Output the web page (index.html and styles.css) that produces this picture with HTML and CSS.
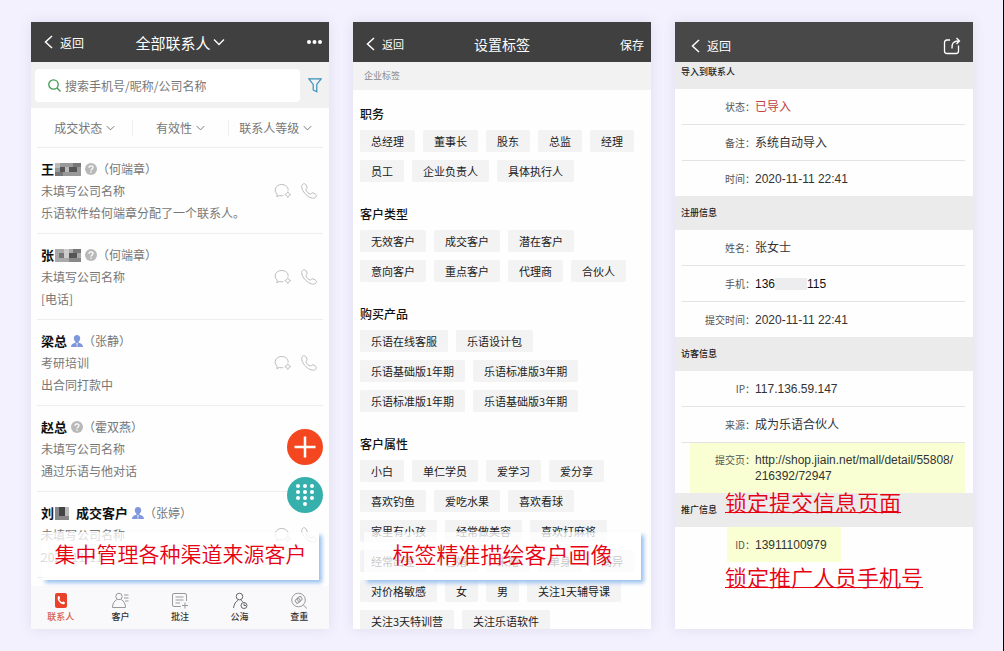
FILE: index.html
```html
<!DOCTYPE html>
<html lang="zh-CN">
<head>
    <meta charset="UTF-8">
    <title>乐语 - 客户管理</title>
    <link rel="stylesheet" href="styles.css">
</head>
<body>

<!-- Shared icons -->
<svg class="sprite" aria-hidden="true">
    <symbol id="back" viewBox="0 0 9 14"><path d="M8 1L1.500 7L8 13" fill="none" stroke="currentColor" stroke-width="1.500"/></symbol>
    <symbol id="down" viewBox="0 0 12 8"><path d="M1 1.500L6 6.500L11 1.500" fill="none" stroke="currentColor" stroke-width="1.300"/></symbol>
    <symbol id="unknown" viewBox="0 0 12 12">
        <circle cx="6" cy="6" r="6" fill="#b9b9b9"/>
        <path d="M4 4.700C4 2.200 8 2.200 8 4.600C8 6 6 6 6 7.500M6 8.600V9.800" fill="none" stroke="#fff" stroke-width="1.300"/>
    </symbol>
    <symbol id="person" viewBox="0 0 12 12">
        <path d="M6 0C7.900 0 9.200 1.300 9.200 3.200C9.200 4.700 8.400 5.900 7.600 6.500V7.700C9.500 8.200 12 9 12 12H0C0 9 2.500 8.200 4.400 7.700V6.500C3.600 5.900 2.800 4.700 2.800 3.200C2.800 1.300 4.100 0 6 0Z" fill="#7f97dc"/>
        <path d="M5 8L6 9.200L7 8M6 9V12" stroke="#fff" stroke-width=".6" fill="none"/>
    </symbol>
    <symbol id="chat" viewBox="0 0 18 16">
        <path d="M3.200 11.200C-.8 7.800 1.500 1.500 7.500 1.500C12 1.500 14.700 4.400 14 7.600M3.200 11.200L2.800 13.600L5.600 12.500C6.800 12.900 8 12.900 9.200 12.600" fill="none" stroke="#bbb" stroke-width="1"/>
        <path d="M13.800 8.700Q14.300 11 16.800 11.600Q14.300 12.200 13.800 14.600Q13.200 12.200 10.800 11.600Q13.200 11 13.800 8.700Z" fill="none" stroke="#bbb" stroke-width=".9"/>
    </symbol>
    <symbol id="phone" viewBox="0 0 16 16">
        <path d="M1.500 1.500C2.700.1 4.300.6 5 1.900L6.100 4.100C6.600 5.200 4.700 5.900 5 6.900C5.700 8.900 7.500 10.700 9.400 11C10.400 11.200 10.700 9.400 11.900 9.800L14.300 11C15.800 11.800 15.700 13.400 14.500 14.400C12.300 16.200 8.200 14.700 5 11.600C1.700 8.400-.6 3.800 1.500 1.500Z" fill="none" stroke="#bbb" stroke-width="1"/>
    </symbol>
</svg>

<main class="screens">

    <!-- Contacts -->
    <section class="phone">
        <header class="topbar">
            <button class="back"><svg class="back-icon"><use href="#back"/></svg>返回</button>
            <button class="title title-large">全部联系人<svg class="title-arrow"><use href="#down"/></svg></button>
            <button class="topbar-action" aria-label="更多">
                <svg width="15" height="4" viewBox="0 0 15 4" fill="#fff"><circle cx="2" cy="2" r="2"/><circle cx="7.500" cy="2" r="2"/><circle cx="13" cy="2" r="2"/></svg>
            </button>
        </header>
        <div class="search">
            <label class="search-box">
                <svg width="13" height="13" viewBox="0 0 13 13" fill="none" stroke="#3c9a4e" stroke-width="1.300"><circle cx="5.500" cy="5.500" r="4.700"/><path d="M9 9L12.500 12.500"/></svg>
                <input type="text" aria-label="搜索" placeholder="搜索手机号/昵称/公司名称">
            </label>
            <button class="search-filter" aria-label="筛选">
                <svg width="14" height="15" viewBox="0 0 14 15" fill="none" stroke="#3a8fbd" stroke-width="1.200"><path d="M.8.800H13.200L8.800 6.500V13.800L5.200 12V6.500Z"/></svg>
            </button>
        </div>
        <div class="filters">
            <button>成交状态<svg class="filter-arrow"><use href="#down"/></svg></button>
            <button>有效性<svg class="filter-arrow"><use href="#down"/></svg></button>
            <button>联系人等级<svg class="filter-arrow"><use href="#down"/></svg></button>
        </div>
        <ul class="contacts">
            <li>
                <div class="contact-text">
                    <div class="contact-name"><strong>王</strong>
                        <svg class="mask" width="26" height="13" viewBox="0 0 26 13"><path fill="#999" d="M0 0H26V13H0Z"/><path fill="#555" d="M5 4H10V9H5ZM14 4H22V9H14Z"/><path fill="#bbb" d="M0 0H5V5H0ZM10 4H14V9H10Z"/><path fill="#777" d="M0 9H8V13H0ZM18 0H26V4H18Z"/></svg>
                        <svg class="badge"><use href="#unknown"/></svg><span>（何端章）</span></div>
                    <div>未填写公司名称</div>
                    <div>乐语软件给何端章分配了一个联系人。</div>
                </div>
                <button aria-label="消息"><svg width="18" height="16"><use href="#chat"/></svg></button>
                <button aria-label="电话"><svg width="16" height="16"><use href="#phone"/></svg></button>
            </li>
            <li>
                <div class="contact-text">
                    <div class="contact-name"><strong>张</strong>
                        <svg class="mask" width="26" height="13" viewBox="0 0 26 13"><path fill="#aaa" d="M0 0H26V13H0Z"/><path fill="#777" d="M4 4H9V9H4ZM18 0H26V4H18Z"/><path fill="#555" d="M14 4H22V9H14Z"/><path fill="#ccc" d="M9 0H14V9H9Z"/><path fill="#888" d="M14 9H26V13H14Z"/></svg>
                        <svg class="badge"><use href="#unknown"/></svg><span>（何端章）</span></div>
                    <div>未填写公司名称</div>
                    <div>[电话]</div>
                </div>
                <button aria-label="消息"><svg width="18" height="16"><use href="#chat"/></svg></button>
                <button aria-label="电话"><svg width="16" height="16"><use href="#phone"/></svg></button>
            </li>
            <li>
                <div class="contact-text">
                    <div class="contact-name"><strong>梁总</strong><svg class="badge"><use href="#person"/></svg><span>（张静）</span></div>
                    <div>考研培训</div>
                    <div>出合同打款中</div>
                </div>
                <button aria-label="消息"><svg width="18" height="16"><use href="#chat"/></svg></button>
                <button aria-label="电话"><svg width="16" height="16"><use href="#phone"/></svg></button>
            </li>
            <li>
                <div class="contact-text">
                    <div class="contact-name"><strong>赵总</strong><svg class="badge"><use href="#unknown"/></svg><span>（霍双燕）</span></div>
                    <div>未填写公司名称</div>
                    <div>通过乐语与他对话</div>
                </div>
            </li>
            <li>
                <div class="contact-text">
                    <div class="contact-name"><strong>刘</strong>
                        <svg class="mask" width="14" height="13" viewBox="0 0 14 13"><path fill="#888" d="M0 0H14V13H0Z"/><path fill="#444" d="M4 0H10V9H4Z"/><path fill="#bbb" d="M10 0H14V9H10Z"/></svg>
                        <strong class="contact-tag">成交客户</strong><svg class="badge"><use href="#person"/></svg><span>（张婷）</span></div>
                    <div>未填写公司名称</div>
                    <div>2020-11-11</div>
                </div>
                <button aria-label="消息"><svg width="18" height="16"><use href="#chat"/></svg></button>
                <button aria-label="电话"><svg width="16" height="16"><use href="#phone"/></svg></button>
            </li>
        </ul>
        <nav class="tabs">
            <a class="active" href="#">
                <svg viewBox="0 0 18 18"><rect x="3" y="1" width="12" height="15" rx="2" fill="#e8432a"/><path d="M6 4.500C6.700 3.700 7.300 4 7.700 4.800L8.100 5.700C8.300 6.300 7.300 6.800 7.400 7.300C7.700 8.600 8.800 9.800 10 10.100C10.500 10.200 10.900 9.200 11.500 9.500L12.600 10.200C13.200 10.700 13 11.500 12.300 12C9.500 13.600 4.200 7.800 6 4.500Z" fill="#fff"/></svg>
                联系人</a>
            <a href="#">
                <svg viewBox="0 0 18 18" fill="none" stroke="#999"><circle cx="8" cy="4.500" r="3.200"/><path d="M5.800 7.500C3 9 1.500 12 1.500 15.500H14.500C14.500 12 13 9 10.200 7.500M13 3H17.500M13 6H17.500M14 9H17.500"/></svg>
                客户</a>
            <a href="#">
                <svg viewBox="0 0 18 18" fill="none" stroke="#999"><path d="M15.500 9V3Q15.500 1.500 14 1.500H3Q1.500 1.500 1.500 3V13Q1.500 14.500 3 14.500H10M4.500 5H12.500M4.500 8H12.500M4.500 11H9M14 10.500V16.500M11 13.500H17"/></svg>
                批注</a>
            <a href="#">
                <svg viewBox="0 0 18 18" fill="none" stroke="#666"><circle cx="8.500" cy="4.500" r="3.300"/><path d="M2.500 16C3 12 5 9.300 7.300 8.200M9.700 8.200Q11 8.800 11.800 9.700"/><circle cx="13" cy="13.500" r="3"/><path d="M13 11.500V13.500H15"/></svg>
                公海</a>
            <a href="#">
                <svg viewBox="0 0 18 18" fill="none" stroke="#999"><circle cx="8.500" cy="8" r="6.800"/><path d="M13.300 13L17 16.500"/><rect x="5.500" y="6.800" width="4.500" height="4" rx="1" transform="rotate(-35 7.700 8.800)"/><rect x="7.300" y="5" width="4.500" height="4" rx="1" transform="rotate(-35 9.500 7)"/></svg>
                查重</a>
        </nav>
        <div class="floating">
            <button class="add" aria-label="新增"><svg width="36" height="36" viewBox="0 0 36 36"><path d="M18 7.500V28.500M7.500 18H28.500" stroke="#fff" stroke-width="2.500"/></svg></button>
            <button class="dial" aria-label="拨号">
                <svg width="36" height="36" viewBox="0 0 36 36" fill="#fff"><circle cx="11" cy="9" r="2"/><circle cx="18" cy="9" r="2"/><circle cx="25" cy="9" r="2"/><circle cx="11" cy="15" r="2"/><circle cx="18" cy="15" r="2"/><circle cx="25" cy="15" r="2"/><circle cx="11" cy="21" r="2"/><circle cx="18" cy="21" r="2"/><circle cx="25" cy="21" r="2"/><circle cx="18" cy="27" r="2"/></svg>
            </button>
        </div>
        <p class="note note-small">集中管理各种渠道来源客户</p>
    </section>

    <!-- Tags -->
    <section class="phone">
        <header class="topbar topbar-tags">
            <button class="back"><svg class="back-icon"><use href="#back"/></svg>返回</button>
            <h1 class="title">设置标签</h1>
            <button class="topbar-action">保存</button>
        </header>
        <p class="subtitle">企业标签</p>
        <div class="tag-groups">
            <h2>职务</h2>
            <div class="tags">
                <button>总经理</button><button>董事长</button><button>股东</button><button>总监</button><button>经理</button>
                <button>员工</button><button>企业负责人</button><button>具体执行人</button>
            </div>
            <h2>客户类型</h2>
            <div class="tags">
                <button>无效客户</button><button>成交客户</button><button>潜在客户</button>
                <button>意向客户</button><button>重点客户</button><button>代理商</button><button>合伙人</button>
            </div>
            <h2>购买产品</h2>
            <div class="tags">
                <button>乐语在线客服</button><button>乐语设计包</button>
                <button>乐语基础版1年期</button><button>乐语标准版3年期</button>
                <button>乐语标准版1年期</button><button>乐语基础版3年期</button>
            </div>
            <h2>客户属性</h2>
            <div class="tags">
                <button>小白</button><button>单仁学员</button><button>爱学习</button><button>爱分享</button>
                <button>喜欢钓鱼</button><button>爱吃水果</button><button>喜欢看球</button>
                <button>家里有小孩</button><button>经常做美容</button><button>喜欢打麻将</button>
                <button>经常出差</button><button>已婚</button><button>未婚</button><button>单身</button><button>离异</button>
                <button>对价格敏感</button><button>女</button><button>男</button><button>关注1天辅导课</button>
                <button>关注3天特训营</button><button>关注乐语软件</button>
            </div>
        </div>
        <p class="note">标签精准描绘客户画像</p>
    </section>

    <!-- Contact details -->
    <section class="phone details">
        <header class="topbar topbar-details">
            <button class="back"><svg class="back-icon"><use href="#back"/></svg>返回</button>
            <span></span>
            <button class="topbar-action" aria-label="分享">
                <svg width="18" height="18" viewBox="0 0 18 18" fill="none" stroke="#fff" stroke-width="1.300"><path d="M7 3H4Q1.500 3 1.500 5.500V14Q1.500 16.500 4 16.500H13Q15.500 16.500 15.500 14V8.500M9 11.500C8.500 6.500 10.500 4 15.500 4M13.500 1L16.500 4L13.500 7"/></svg>
            </button>
        </header>
        <h2 class="first">导入到联系人</h2>
        <dl>
            <div><dt>状态：</dt><dd class="imported">已导入</dd></div>
            <div><dt>备注：</dt><dd>系统自动导入</dd></div>
            <div><dt>时间：</dt><dd>2020-11-11 22:41</dd></div>
        </dl>
        <h2>注册信息</h2>
        <dl>
            <div><dt>姓名：</dt><dd>张女士</dd></div>
            <div><dt>手机：</dt><dd class="mobile">136<span class="hidden-digits"></span>115</dd></div>
            <div><dt>提交时间：</dt><dd>2020-11-11 22:41</dd></div>
        </dl>
        <h2>访客信息</h2>
        <dl>
            <div><dt>IP：</dt><dd>117.136.59.147</dd></div>
            <div><dt>来源：</dt><dd>成为乐语合伙人</dd></div>
            <div class="marked marked-page"><dt>提交页：</dt><dd>http://shop.jiain.net/mall/detail/55808/<br>216392/72947</dd></div>
        </dl>
        <div class="anchor"><p class="caption caption-page">锁定提交信息页面</p></div>
        <h2>推广信息</h2>
        <dl>
            <div class="marked marked-id"><dt>ID：</dt><dd>13911100979</dd></div>
        </dl>
        <div class="anchor"><p class="caption">锁定推广人员手机号</p></div>
    </section>

</main>

</body>
</html>
```
FILE: styles.css
```css
* {
    box-sizing: border-box;
}
body {
    margin: 0;
    height: 100vh;
    padding: 22px 30px 22px 31px;
    border-right: 1px solid #000;
    background-color: #f3f1fe;
    font-family: "Noto Sans CJK SC", sans-serif;
    font-size: 12px;
    color: #333;
}
h1, h2, p, ul, dl, dd {
    margin: 0;
    padding: 0;
}
button, input {
    border: none;
    padding: 0;
    background: none;
    font: inherit;
    color: inherit;
}
button {
    cursor: pointer;
}
svg {
    display: block;
    flex: none;
}
.sprite {
    position: absolute;
    width: 0;
    height: 0;
}
.screens {
    display: grid;
    grid-template-columns: repeat(3, 1fr);
    gap: 24px;
    height: 100%;
}
.phone {
    position: relative;
    display: flex;
    flex-direction: column;
    min-height: 0;
    overflow: hidden;
    background-color: #fefefe;
    box-shadow: 0 0 12px rgba(90, 80, 120, 0.12);
}

/* Top bar */
.topbar {
    flex: none;
    display: grid;
    grid-template-columns: 1fr auto 1fr;
    align-items: center;
    height: 40px;
    padding: 0 7px;
    background-color: #404040;
    color: #fff;
}
.topbar-tags {
    padding-top: 4px;
}
.topbar-details {
    padding: 7px 12px 0 10px;
    background-color: #484848;
}
.back {
    display: flex;
    align-items: center;
    gap: 7px;
    padding-left: 6px;
}
.topbar-tags .back {
    font-size: 11px;
}
.back-icon {
    width: 9px;
    height: 14px;
}
.title {
    display: flex;
    align-items: center;
    gap: 2px;
    font-size: 14px;
    font-weight: normal;
}
.title-large {
    font-size: 15px;
}
.title-arrow {
    width: 12px;
    height: 8px;
}
.topbar-action {
    justify-self: end;
}

/* Search */
.search {
    flex: none;
    display: flex;
    align-items: center;
    gap: 8px;
    height: 46px;
    padding: 0 7px 0 4px;
    background-color: #f2f1f2;
}
.search-box {
    flex: 1;
    display: flex;
    align-items: center;
    gap: 4px;
    height: 33px;
    padding: 0 13px;
    border-radius: 4px;
    background-color: #fff;
}
.search-box input {
    flex: 1;
    min-width: 0;
    outline: none;
}
.search-box input::placeholder {
    color: #777;
    opacity: 1;
}
.filters {
    flex: none;
    display: grid;
    grid-template-columns: repeat(3, 1fr);
    align-items: center;
    height: 40px;
    margin: 0 6px;
    border-bottom: 1px solid #eee;
    color: #777;
}
.filters button {
    display: flex;
    align-items: center;
    justify-content: center;
    gap: 4px;
    height: 16px;
    white-space: nowrap;
}
.filters button + button {
    border-left: 1px solid #eee;
}
.filter-arrow {
    width: 9px;
    height: 6px;
}

/* Contact list */
.contacts {
    flex: 1;
    min-height: 0;
    overflow: hidden;
    list-style: none;
    color: #777;
}
.contacts li {
    display: flex;
    align-items: center;
    gap: 9px;
    margin: 0 6px;
    padding: 10px 6px 9px 4px;
    border-bottom: 1px solid #eee;
}
.contact-text {
    flex: 1;
    line-height: 22px;
    white-space: nowrap;
}
.contact-name {
    display: flex;
    align-items: center;
}
.contact-name strong {
    font-size: 13px;
    color: #111;
}
.contact-name .contact-tag {
    margin-left: 7px;
}
.mask {
    margin-left: 1px;
}
.badge {
    width: 12px;
    height: 12px;
    margin-left: 4px;
}

/* Bottom tabs */
.tabs {
    flex: none;
    display: grid;
    grid-template-columns: repeat(5, 1fr);
    height: 43px;
    padding-top: 6px;
    background-color: #f9f8fb;
}
.tabs a {
    display: flex;
    flex-direction: column;
    align-items: center;
    font-size: 9px;
    font-weight: 500;
    line-height: 14px;
    color: #333;
    text-decoration: none;
}
.tabs .active {
    color: #d4604c;
}
.tabs svg {
    width: 18px;
    height: 18px;
}

/* Round buttons over the list */
.floating {
    position: absolute;
    right: 6px;
    bottom: 116px;
    display: grid;
    gap: 12px;
}
.floating button {
    width: 36px;
    height: 36px;
    border-radius: 50%;
}
.add {
    background-color: #f5471f;
}
.dial {
    background-color: #36b0ac;
}

/* Notes over the screens */
.note {
    position: absolute;
    left: 11px;
    right: 10px;
    bottom: 49px;
    height: 48px;
    background-color: rgba(255, 255, 255, 0.75);
    box-shadow: 3px 3px 4px #9cc2ee;
    font-size: 22px;
    font-weight: 350;
    line-height: 42px;
    text-align: center;
    color: #e60012;
    white-space: nowrap;
}
.note-small {
    font-size: 21px;
}

/* Tags */
.subtitle {
    flex: none;
    height: 28px;
    padding-left: 11px;
    background-color: #f2f2f3;
    font-size: 9px;
    line-height: 28px;
    color: #888;
}
.tag-groups {
    flex: 1;
    min-height: 0;
    overflow: hidden;
    padding: 14px 11px 0 7px;
}
.tag-groups h2 {
    margin-bottom: 6px;
    font-size: 12px;
    font-weight: 500;
    line-height: 20px;
    color: #111;
}
.tags {
    display: flex;
    flex-wrap: wrap;
    gap: 8px;
    margin-bottom: 22px;
}
.tags button {
    height: 22px;
    padding: 0 11px;
    border-radius: 2px;
    background-color: #f3f3f4;
    font-size: 11px;
    line-height: 22px;
    color: #222;
}

/* Details */
.details h2 {
    flex: none;
    height: 34px;
    padding-left: 6px;
    background-color: #ebebeb;
    font-size: 9px;
    font-weight: 500;
    line-height: 34px;
    color: #222;
}
.details h2.first {
    height: 27px;
    line-height: 19px;
}
.details dl > div {
    display: flex;
    align-items: center;
    height: 36px;
    margin: 0 8px 0 7px;
    border-bottom: 1px solid #e3e3e3;
}
.details dl > div:last-child {
    height: 35px;
    border-bottom: none;
}
.details dt {
    width: 73px;
    font-size: 10px;
    text-align: right;
    color: #555;
}
.details dd {
    font-family: "Liberation Sans", "Noto Sans CJK SC", sans-serif;
    line-height: 16px;
}
.details .imported {
    color: #c0443f;
}
.details .mobile {
    display: flex;
    align-items: center;
    color: #111;
}
.hidden-digits {
    width: 32px;
    height: 12px;
    background-color: #ededf0;
}
.details .marked {
    background-color: #f9ffd2;
}
.details dl > .marked-page:last-child {
    align-items: flex-start;
    height: 50px;
    margin-left: 15px;
    padding-top: 9px;
}
.details .marked-page dt {
    width: 65px;
}
.details dl > .marked-id {
    width: fit-content;
    margin-left: 52px;
    padding-right: 14px;
}
.details .marked-id dt {
    width: 28px;
}
.anchor {
    position: relative;
}
.caption {
    position: absolute;
    left: 50px;
    top: 0;
    font-size: 22px;
    font-weight: 350;
    line-height: 28px;
    color: #e60012;
    text-decoration: underline;
    text-decoration-thickness: 1px;
    white-space: nowrap;
}
.caption-page {
    top: -6px;
}
```
